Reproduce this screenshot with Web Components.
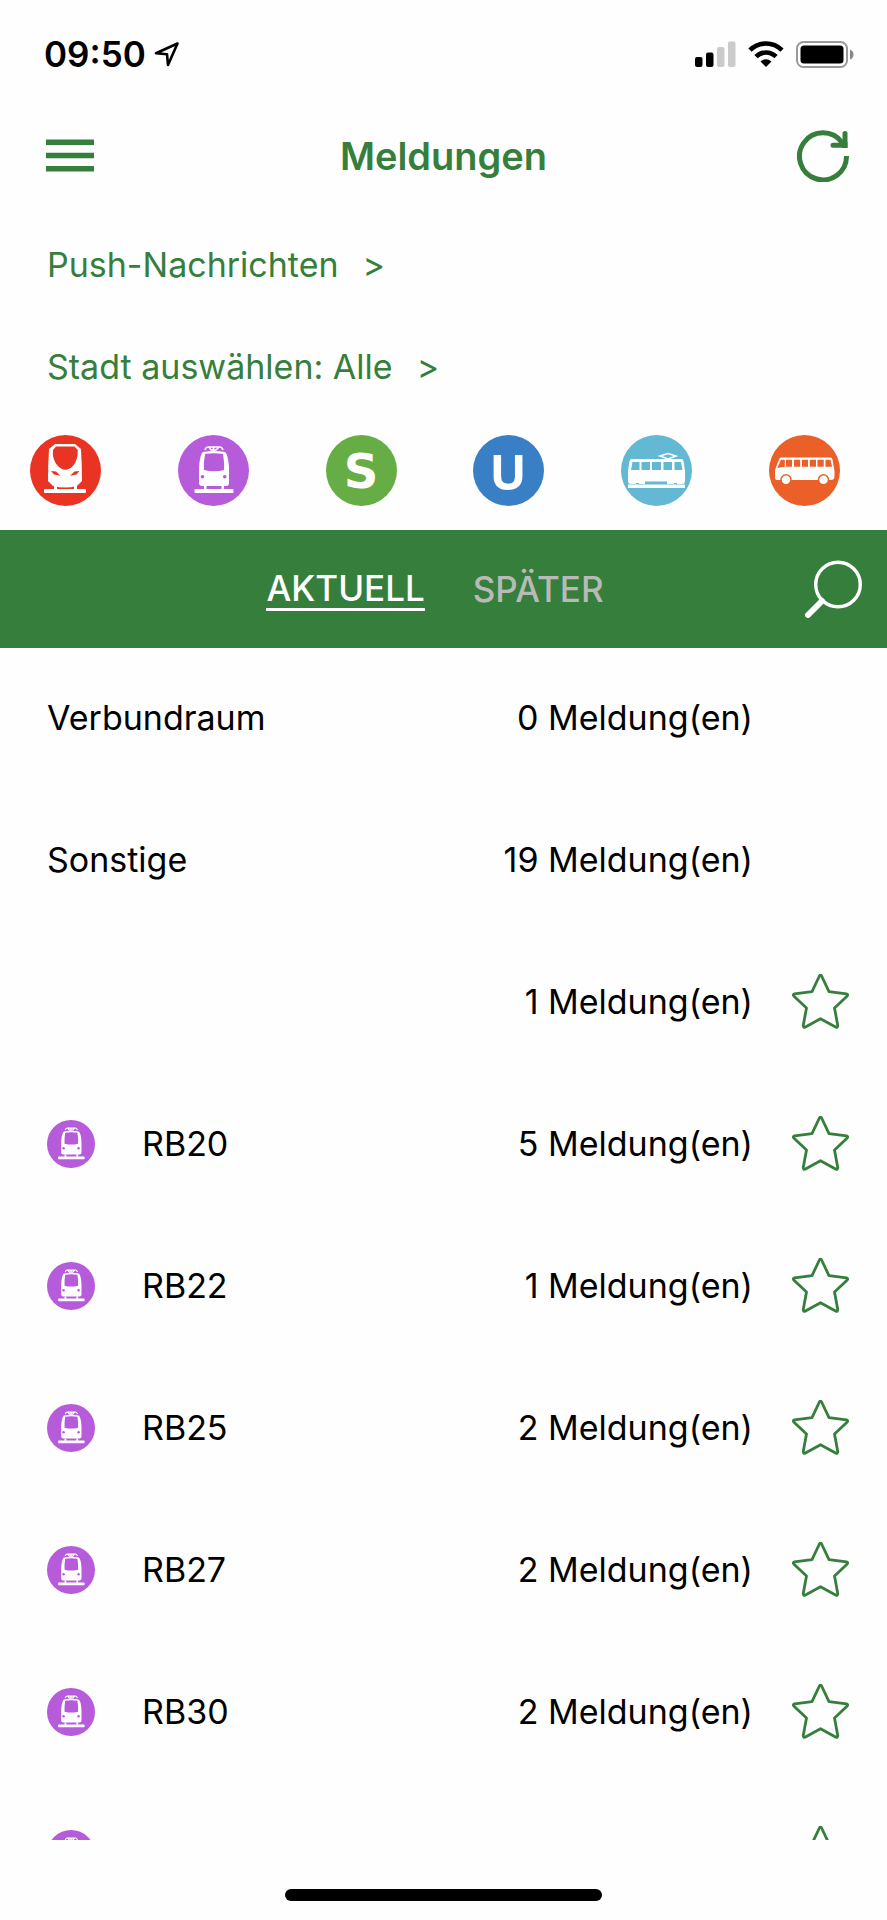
<!DOCTYPE html>
<html lang="de">
<head>
<meta charset="utf-8">
<meta name="viewport" content="width=device-width, initial-scale=1">
<title>Meldungen</title>
<style>
  html, body { margin: 0; background: #fefefe; }
  body { font-family: Inter, "Noto Sans", sans-serif; font-size: 34px; line-height: 44px; color: #000; }
</style>
</head>
<body>
<notice-app></notice-app>

<script>
const define = (name, html, setup) => {
  const template = document.createElement('template');
  template.innerHTML = html;
  customElements.define(name, class extends HTMLElement {
    constructor() {
      super();
      this.attachShadow({ mode: 'open' }).append(template.content.cloneNode(true));
    }
    connectedCallback() { if (setup) setup(this, this.shadowRoot); }
  });
};

const signs = {
  zug: ['Fernzug', '#e93323', `
    <path fill="#fff" d="M25 9H45L51 14Q52 30 52 46L47 51Q35 54 23 51L18 46Q18 30 19 14Z"/>
    <path fill="#e93323" d="M26 11.500H44.500L47.800 15Q48 25 43 31Q35 38.500 28 31Q22 25 23 15ZM21 36L26 36.500 30.500 40.700 24 39.500ZM49.500 36L44.500 36.500 40 40.700 46.500 39.500Z"/>
    <path fill="#fff" d="M24 51h3v4h-3zM44 51h3v4h-3z"/><rect x="14" y="54" width="42" height="4" rx="1" fill="#fff"/>`],
  bahn: ['Regionalbahn', '#b65cdb', `
    <path fill="none" stroke="#fff" stroke-width="1.600" d="M27 15Q28 11.500 31 12H41Q44 11.500 45 15M31 12L33 15H38L41 12M35.500 12V16"/>
    <path fill="#fff" d="M25 17Q36 15 47 17Q50 19 51 32V48Q51 51 48 51H24Q21 51 21 48V32Q22 19 25 17Z"/>
    <path fill="#b65cdb" d="M27 19Q36 17.500 45 19Q46.500 27 46 35Q36 37.500 26 35Q25.500 27 27 19Z"/>
    <circle cx="24.500" cy="41.700" r="1.800" fill="#b65cdb"/><circle cx="46.700" cy="41.700" r="1.800" fill="#b65cdb"/>
    <path fill="#fff" d="M26 51h2.500v4H26zM43.500 51H46v4h-2.500z"/><rect x="16.500" y="54" width="39" height="4" rx="1" fill="#fff"/>`],
  s: ['S-Bahn', '#67ad45', '<text x="35" y="53" text-anchor="middle" font-family="DejaVu Sans, sans-serif" font-weight="700" font-size="48" fill="#fff">S</text>'],
  u: ['U-Bahn', '#387fc6', '<text x="35" y="55" text-anchor="middle" font-family="Noto Sans, sans-serif" font-weight="700" font-size="49" fill="#fff">U</text>'],
  tram: ['Straßenbahn', '#63b8d3', `
    <path fill="none" stroke="#fff" stroke-width="1.600" d="M39 21L47 18.500 55 21 47 24Z"/>
    <path fill="#fff" d="M11 24H60Q62 24 62.500 26L64 36V46Q64 49 61 49H10Q7 49 7 46V36L8.500 26Q9 24 11 24Z"/>
    <path fill="#63b8d3" d="M11.500 27H18.500V35H10ZM20.500 27H29V35H20.500ZM31 27H40V35H31ZM42.500 27H51V35H42.500ZM53.500 27H60L61.500 35H53.500ZM24 46.500H46V49H24Z"/>
    <path fill="#63b8d3" d="M15 48h3v1.500h-3zM53 48h3v1.500h-3z"/><path fill="#fff" d="M7 49.500H64V53H7Z"/>`],
  bus: ['Bus', '#eb5f29', `
    <path fill="#fff" d="M12 22.500H61Q63 22.500 63.500 24.500L65.500 36V42Q65 45 62 45H8Q6 45 6 42V35L10 24.500Q10.500 22.500 12 22.500Z"/>
    <path fill="#eb5f29" d="M12 24.800H15.800V32Q12 32 8.200 33ZM17 24.800h6v7h-6zM25 24.800h6.200v7H25zM33 24.800h6v7h-6zM40.800 24.800H47v7h-6.200zM48.500 24.800h6.200v7h-6.200zM56.500 24.800h5l1.500 7h-6.500z"/>
    <g fill="#fff" stroke="#eb5f29" stroke-width="1.500"><circle cx="17" cy="44.700" r="5"/><circle cx="54.500" cy="44.700" r="5"/></g>`]
};

/* Round line sign; the "kind" attribute selects the vehicle. */
define('line-sign', `
  <style>
    :host { display: block; }
    svg { display: block; width: 100%; height: auto; }
  </style>
  <svg viewBox="0 0 71 71" role="img"></svg>`, (host, root) => {
  const [label, color, art] = signs[host.getAttribute('kind')];
  const svg = root.querySelector('svg');
  svg.setAttribute('aria-label', label);
  svg.innerHTML = `<circle cx="35.500" cy="35.500" r="35.500" fill="${color}"/>${art}`;
});

define('status-bar', `
  <style>
    :host { display: flex; align-items: center; justify-content: space-between; height: 44px; padding: 32px 33px 0 44px; }
    div { display: flex; align-items: center; }
    .time { gap: 8px; font-size: 35px; font-weight: 600; }
    .state { gap: 12px; }
    svg { display: block; }
  </style>
  <div class="time"><span>09:50</span>
    <svg width="26" height="26" viewBox="0 0 26 26" fill="none" stroke="#000" stroke-width="2.600" stroke-linejoin="round"><path d="M23.500 2.500L2 12.200 13 13.200 14 24Z"/></svg>
  </div>
  <div class="state">
    <svg width="41" height="26" viewBox="0 0 41 26"><rect y="16" width="7.500" height="10" rx="2"/><rect x="11" y="11.500" width="7.500" height="14.500" rx="2"/><g fill="#cbcbcb"><rect x="22" y="6" width="7.500" height="20" rx="2"/><rect x="33" y="0.500" width="7.500" height="25.500" rx="2"/></g></svg>
    <svg width="36" height="26" viewBox="0 0 36 26"><g fill="none" stroke="#000" stroke-width="4.600"><path d="M2 9.200A22.500 22.500 0 0 1 34 9.200"/><path d="M8 15.700A14 14 0 0 1 28 15.700"/></g><path d="M12.500 20.500Q18 16 23.500 20.500L18 26Z"/></svg>
    <svg width="58" height="27" viewBox="0 0 58 27"><rect x="1" y="1" width="50" height="25" rx="6.500" fill="none" stroke="#999" stroke-width="2"/><rect x="4.500" y="4.500" width="43" height="18" rx="3.500"/><path fill="#888" d="M54 8.500Q57.500 10 57.500 13.500T54 18.500Z"/></svg>
  </div>`);

define('title-bar', `
  <style>
    :host { display: grid; grid-template-columns: 1fr auto 1fr; align-items: center; padding: 46px 38px 0; height: 68px; color: #367e3b; }
    h1 { margin: 0; font-size: 38px; font-weight: 600; line-height: 48px; }
    button { border: 0; padding: 0; background: none; color: inherit; }
    button:last-child { justify-self: end; }
    .menu { justify-self: start; padding-left: 8px; }
    svg { display: block; }
  </style>
  <button class="menu" aria-label="Menü"><svg width="48" height="34" viewBox="0 0 48 34" fill="currentColor"><path d="M0 .5h48V6H0zM0 13.700h48v5.500H0zM0 27h48v5.500H0z"/></svg></button>
  <h1>Meldungen</h1>
  <button aria-label="Aktualisieren"><svg width="52" height="52" viewBox="0 0 52 52" fill="none" stroke="currentColor" stroke-width="5"><path d="M49.500 26A23.500 23.500 0 1 1 45 12.500L48 16"/><path d="M48 3.500V15.300H36" stroke-linecap="round"/><path d="M48 12h2.500v6H45" fill="currentColor" stroke="none"/></svg></button>`);

define('setting-link', `
  <style>
    :host { display: block; }
    a { display: inline-flex; gap: 24px; color: #367e3b; text-decoration: none; }
  </style>
  <a href="#"><slot></slot><span aria-hidden="true">&gt;</span></a>`);

define('line-filter', `
  <style>
    :host { display: grid; grid-template-columns: repeat(6, 1fr); }
    button { justify-self: start; width: 71px; margin-left: 30px; padding: 0; border: 0; background: none; }
  </style>
  ${Object.keys(signs).map(kind => `<button><line-sign kind="${kind}"></line-sign></button>`).join('')}`);

define('period-tabs', `
  <style>
    :host { display: grid; grid-template-columns: 1fr auto 1fr; align-items: center; height: 118px; padding: 0 25px 0 8px; background: #367e3b; }
    nav { grid-column: 2; display: flex; align-items: center; gap: 48px; }
    button { border: 0; padding: 0; background: none; color: #b8bab8; font: inherit; font-size: 35px; font-weight: 500; line-height: 40px; }
    .active { color: #fff; border-bottom: 3px solid #fff; }
    .search { justify-self: end; }
    svg { display: block; }
  </style>
  <nav><button class="active" aria-current="true">AKTUELL</button><button>SPÄTER</button></nav>
  <button class="search" aria-label="Suchen"><svg width="58" height="58" viewBox="0 0 58 58" fill="none" stroke="#fff"><circle cx="34" cy="24.500" r="22.300" stroke-width="3.400"/><path d="M18 41L4 55" stroke-width="6" stroke-linecap="round"/></svg></button>`);

/* One line of the list: optional sign and star, name in the slot, count as attribute. */
define('notice-row', `
  <style>
    :host { display: grid; grid-template-columns: auto 1fr auto 57px; align-items: center; box-sizing: border-box; height: 142px; padding: 0 38px 2px 47px; }
    line-sign { width: 48px; margin-right: 47px; }
    .count { grid-column: 3; margin-right: 39px; }
    .name { grid-column: 2; }
    button { border: 0; padding: 0; background: none; }
    svg { display: block; }
  </style>
  <span class="name"><slot></slot></span><span class="count"></span>`, (host, root) => {
  root.querySelector('.count').textContent = `${host.getAttribute('count')} Meldung(en)`;
  if (host.hasAttribute('kind')) {
    const sign = document.createElement('line-sign');
    sign.setAttribute('kind', host.getAttribute('kind'));
    root.querySelector('.name').before(sign);
  }
  if (host.hasAttribute('star')) {
    const button = document.createElement('button');
    button.setAttribute('aria-label', 'Als Favorit merken');
    button.innerHTML = '<svg width="57" height="56" viewBox="0 0 57 56" fill="none" stroke="#367e3b" stroke-width="2.800" stroke-linejoin="round"><path d="M27.400 2Q28.500 .2 29.600 2L37 17.700 54.500 19.900Q56.500 20.500 55 22.200L42.500 33.900 45.800 51.700Q45.600 53.700 44 53.200L28.500 44.700 13 53.200Q11.400 53.700 11.200 51.700L14.500 33.900 2 22.200Q.5 20.500 2.500 19.900L20 17.700Z"/></svg>';
    root.append(button);
  }
});

define('home-indicator', `
  <style>
    :host { display: flex; justify-content: center; padding: 49px 0 19px; }
    span { width: 317px; height: 12px; border-radius: 6px; background: #000; }
  </style>
  <span></span>`);

define('notice-app', `
  <style>
    :host { display: flex; flex-direction: column; height: 100vh; }
    status-bar, title-bar, line-filter, period-tabs, home-indicator, .settings { flex: none; }
    .settings { display: grid; gap: 58px; padding: 53px 47px 46px; }
    line-filter { margin-bottom: 24px; }
    main { flex: 1 1 0; min-height: 0; overflow-y: auto; scrollbar-width: none; }
  </style>
  <status-bar></status-bar>
  <title-bar></title-bar>
  <div class="settings">
    <setting-link>Push-Nachrichten</setting-link>
    <setting-link>Stadt auswählen: Alle</setting-link>
  </div>
  <line-filter></line-filter>
  <period-tabs></period-tabs>
  <main>
    <notice-row count="0">Verbundraum</notice-row>
    <notice-row count="19">Sonstige</notice-row>
    <notice-row count="1" star></notice-row>
    <notice-row count="5" kind="bahn" star>RB20</notice-row>
    <notice-row count="1" kind="bahn" star>RB22</notice-row>
    <notice-row count="2" kind="bahn" star>RB25</notice-row>
    <notice-row count="2" kind="bahn" star>RB27</notice-row>
    <notice-row count="2" kind="bahn" star>RB30</notice-row>
    <notice-row count="2" kind="bahn" star>RB32</notice-row>
  </main>
  <home-indicator></home-indicator>`);
</script>
</body>
</html>
